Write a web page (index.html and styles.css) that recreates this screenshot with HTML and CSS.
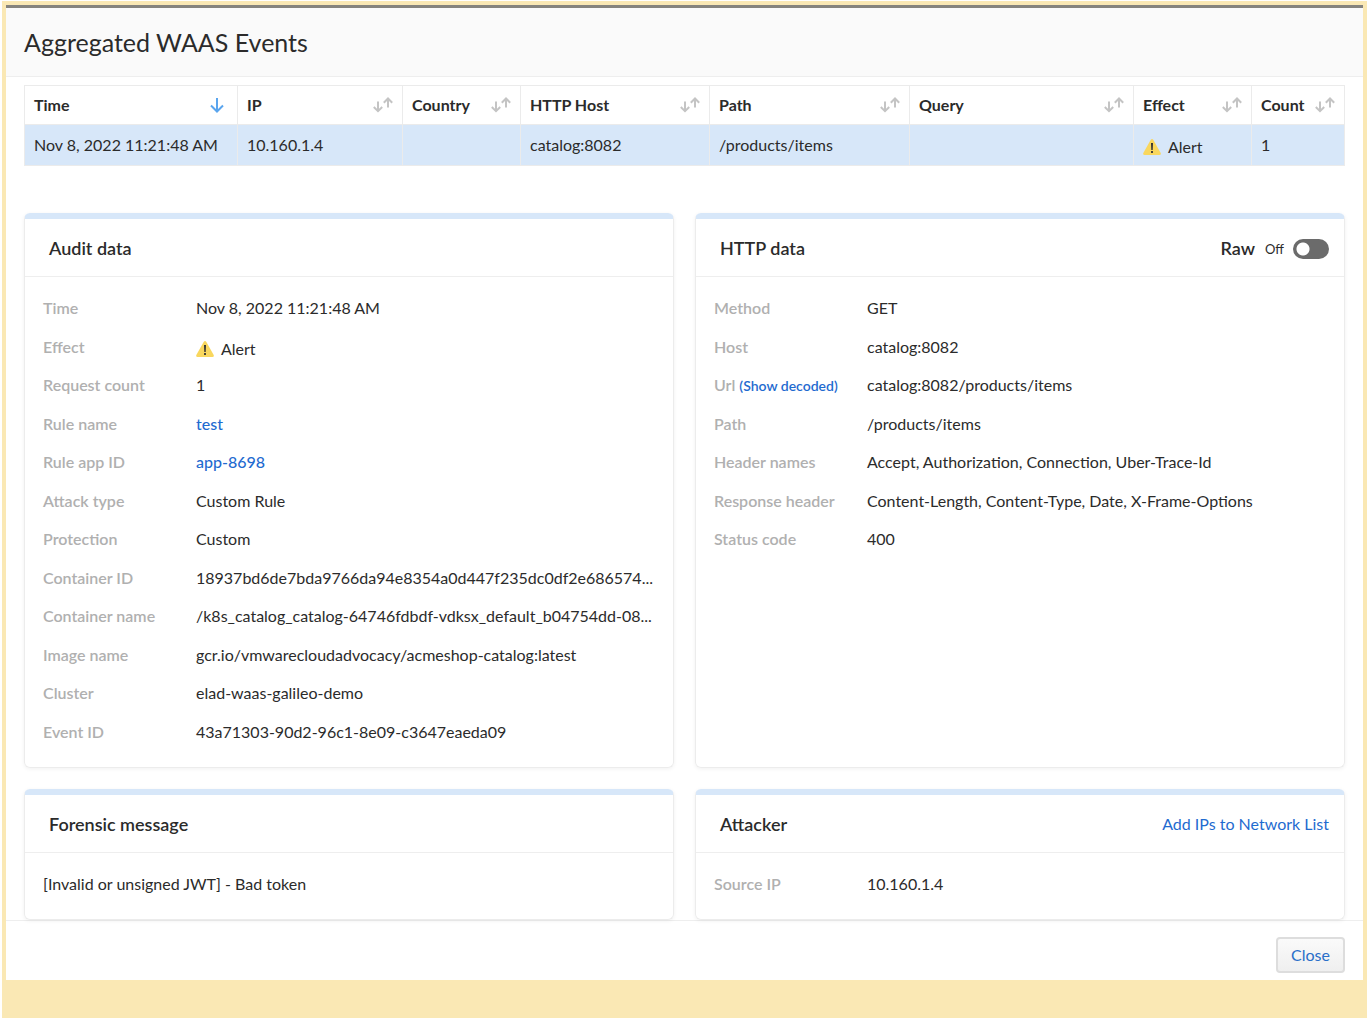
FILE: index.html
```
<!DOCTYPE html>
<html lang="en">
<head>
<meta charset="utf-8">
<title>Aggregated WAAS Events</title>
<link rel="stylesheet" href="styles.css">
</head>
<body>
<svg width="0" height="0" class="defs" aria-hidden="true">
  <symbol id="sort" viewBox="0 0 20 16"><path d="M5 4.500v9.500M.8 10l4.200 4.200L9.200 10M15 10.500V1.500M10.800 5.700L15 1.500l4.200 4.200"/></symbol>
  <symbol id="sort-down" viewBox="0 0 14 16"><path d="M7 1v13M1 8.500l6 6 6-6"/></symbol>
  <symbol id="warning" viewBox="0 0 18 16"><path fill="#f9d75e" d="M7.600.9Q9-.8 10.400.9L17.700 14Q18.200 16 16.500 16h-15Q-.2 16 .3 14z"/><path fill="#333" d="M8 4h2l-.3 7H8.300zM8.100 12h1.800v2H8.100z"/></symbol>
</svg>
<div class="frame">
  <main class="modal">
    <header class="modal-header"><h1>Aggregated WAAS Events</h1></header>
    <div class="modal-body">
      <table class="events">
        <colgroup>
          <col class="c-time"><col class="c-ip"><col class="c-effect"><col class="c-host"><col class="c-path"><col><col class="c-effect"><col class="c-count">
        </colgroup>
        <thead>
          <tr>
            <th><div class="head">Time <svg class="sorted"><use href="#sort-down"/></svg></div></th>
            <th><div class="head">IP <svg class="sort"><use href="#sort"/></svg></div></th>
            <th><div class="head">Country <svg class="sort"><use href="#sort"/></svg></div></th>
            <th><div class="head">HTTP Host <svg class="sort"><use href="#sort"/></svg></div></th>
            <th><div class="head">Path <svg class="sort"><use href="#sort"/></svg></div></th>
            <th><div class="head">Query <svg class="sort"><use href="#sort"/></svg></div></th>
            <th><div class="head">Effect <svg class="sort"><use href="#sort"/></svg></div></th>
            <th><div class="head">Count <svg class="sort"><use href="#sort"/></svg></div></th>
          </tr>
        </thead>
        <tbody>
          <tr>
            <td>Nov 8, 2022 11:21:48 AM</td><td>10.160.1.4</td><td></td><td>catalog:8082</td><td>/products/items</td><td></td>
            <td><span class="alert"><svg><use href="#warning"/></svg>Alert</span></td><td>1</td>
          </tr>
        </tbody>
      </table>
      <div class="cards">
        <section class="card">
          <div class="card-header"><h2>Audit data</h2></div>
          <dl>
            <div><dt>Time</dt><dd>Nov 8, 2022 11:21:48 AM</dd></div>
            <div><dt>Effect</dt><dd><span class="alert"><svg><use href="#warning"/></svg>Alert</span></dd></div>
            <div><dt>Request count</dt><dd>1</dd></div>
            <div><dt>Rule name</dt><dd><a href="#">test</a></dd></div>
            <div><dt>Rule app ID</dt><dd><a href="#">app-8698</a></dd></div>
            <div><dt>Attack type</dt><dd>Custom Rule</dd></div>
            <div><dt>Protection</dt><dd>Custom</dd></div>
            <div><dt>Container ID</dt><dd>18937bd6de7bda9766da94e8354a0d447f235dc0df2e686574...</dd></div>
            <div><dt>Container name</dt><dd>/k8s_catalog_catalog-64746fdbdf-vdksx_default_b04754dd-08...</dd></div>
            <div><dt>Image name</dt><dd>gcr.io/vmwarecloudadvocacy/acmeshop-catalog:latest</dd></div>
            <div><dt>Cluster</dt><dd>elad-waas-galileo-demo</dd></div>
            <div><dt>Event ID</dt><dd>43a71303-90d2-96c1-8e09-c3647eaeda09</dd></div>
          </dl>
        </section>
        <section class="card">
          <div class="card-header"><h2>HTTP data</h2>
            <label class="raw">Raw <span>Off</span><input type="checkbox" role="switch"></label>
          </div>
          <dl>
            <div><dt>Method</dt><dd>GET</dd></div>
            <div><dt>Host</dt><dd>catalog:8082</dd></div>
            <div><dt>Url <a href="#">(Show decoded)</a></dt><dd>catalog:8082/products/items</dd></div>
            <div><dt>Path</dt><dd>/products/items</dd></div>
            <div><dt>Header names</dt><dd>Accept, Authorization, Connection, Uber-Trace-Id</dd></div>
            <div><dt>Response header</dt><dd>Content-Length, Content-Type, Date, X-Frame-Options</dd></div>
            <div><dt>Status code</dt><dd>400</dd></div>
          </dl>
        </section>
        <section class="card">
          <div class="card-header"><h2>Forensic message</h2></div>
          <p>[Invalid or unsigned JWT] - Bad token</p>
        </section>
        <section class="card">
          <div class="card-header"><h2>Attacker</h2><a href="#">Add IPs to Network List</a></div>
          <dl><div><dt>Source IP</dt><dd>10.160.1.4</dd></div></dl>
        </section>
      </div>
    </div>
    <footer class="modal-footer"><button type="button">Close</button></footer>
  </main>
</div>
</body>
</html>
```
FILE: styles.css
```
* { box-sizing: border-box; }
body {
  margin: 0;
  padding: 1px 1px 0 2px;
  font: 400 16px/20px Lato, sans-serif;
  color: #2b2b2b;
  background: #fff;
}
.defs { position: absolute; }
h1, h2, p, dl, dd { margin: 0; }
a { color: #1f6bd0; text-decoration: none; }
.frame { min-height: calc(100vh - 1px); padding: 4px; background: #fae8b4; }
.modal { background: #fff; border-top: 3px solid #85837d; }
.modal-header {
  padding: 20px 18px;
  background: #fafafa;
  border-bottom: 1px solid #eee;
}
h1 { font-size: 25px; line-height: 28px; font-weight: 400; }
.modal-body { padding: 8px 18px 0; }

.events { width: 100%; border-collapse: collapse; table-layout: fixed; }
.c-time { width: 213px; }
.c-ip { width: 165px; }
.c-effect { width: 118px; }
.c-host { width: 189px; }
.c-path { width: 200px; }
.c-count { width: 93px; }
.events th, .events td { padding: 0 9px; border: 1px solid #ebebeb; text-align: left; }
.events th { height: 39px; font-weight: 700; }
.events td { height: 41px; background: #d7e7f9; white-space: nowrap; }
.head { display: flex; align-items: center; justify-content: space-between; }
.head svg { fill: none; stroke: #c4c4c4; stroke-width: 2; }
.sort { width: 20px; height: 16px; }
.head .sorted { width: 14px; height: 16px; margin-right: 4px; stroke: #5aa5ee; }
.alert { display: flex; align-items: center; gap: 7px; padding-top: 4px; }
.alert svg { width: 18px; height: 16px; }

.cards {
  display: grid;
  grid-template-columns: 1fr 1fr;
  gap: 21px;
  margin-top: 47px;
}
.card {
  min-width: 0;
  border: 1px solid #ececec;
  border-top: 6px solid #d7e7f9;
  border-radius: 6px;
  box-shadow: 0 1px 4px rgba(0, 0, 0, .06);
}
.card-header {
  display: flex;
  align-items: center;
  justify-content: space-between;
  height: 58px;
  padding: 0 15px 0 24px;
  border-bottom: 1px solid #eee;
}
h2 { font-size: 18px; line-height: 24px; font-weight: 600; }
.raw { display: flex; align-items: center; font-size: 18px; font-weight: 600; }
.raw span { margin: 3px 9px 0 10px; font-size: 13px; font-weight: 400; }
.raw input {
  appearance: none;
  width: 36px;
  height: 20px;
  margin: 3px 0 0;
  border-radius: 10px;
  background: radial-gradient(circle at 10px 10px, #fff 6px, #6b6b6b 7px);
}
dl, .card p { padding: 12px 18px 16px; }
.card p { line-height: 38px; }
dl div { display: grid; grid-template-columns: 153px 1fr; height: 38px; align-items: center; }
dl div:nth-child(even) { height: 39px; }
dt { color: #b0b0b0; font-weight: 600; white-space: nowrap; }
dt a { font-size: 14px; font-weight: 600; }
dd { min-width: 0; white-space: nowrap; }
dd a { font-weight: 500; }
.modal-footer {
  display: flex;
  justify-content: flex-end;
  padding: 16px 18px 7px;
  border-top: 1px solid #eee;
}
button {
  height: 36px;
  padding: 0 13px;
  border: 2px solid #ddd;
  border-radius: 4px;
  background: linear-gradient(#fafafa, #efefef);
  color: #2a6fc9;
  font: inherit;
}
```
